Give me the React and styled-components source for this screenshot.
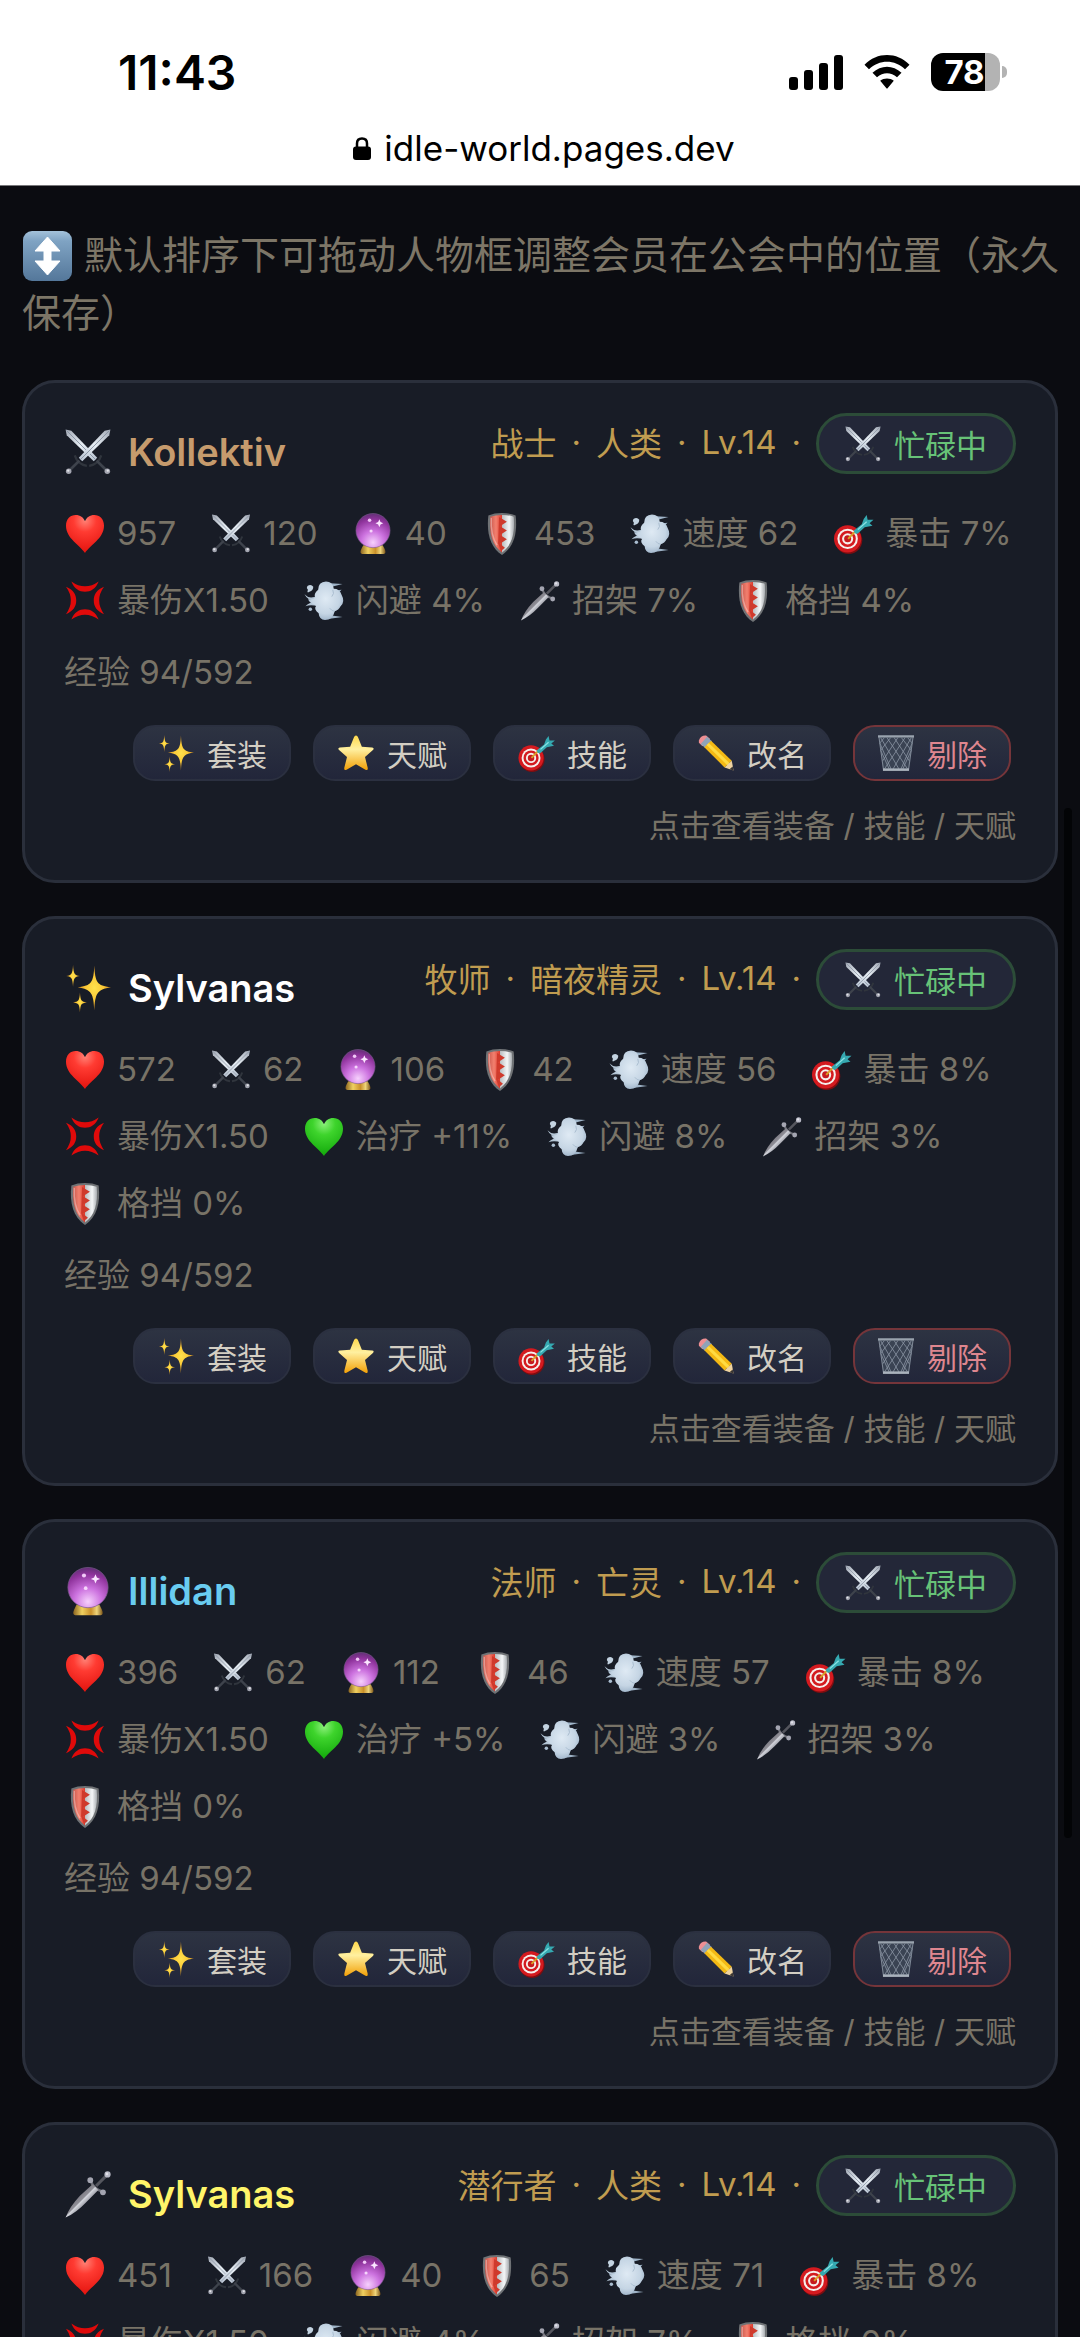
import React from 'react';
import styled, { createGlobalStyle } from 'styled-components';

const GlobalStyle = createGlobalStyle`
  * {
    box-sizing: border-box;
  }

  body {
    margin: 0;
    background: #0b0c11;
    font-family: Inter, 'Noto Sans CJK SC', sans-serif;
  }

  button {
    font-family: inherit;
  }
`;

const Screen = styled.div`
  position: relative;
  height: 100vh;
  overflow: hidden;
`;

const BrowserHeader = styled.header`
  height: 186px;
  background: #fff;
  color: #000;
  border-bottom: 1px solid #77777a;
`;

const StatusRow = styled.div`
  display: flex;
  align-items: center;
  justify-content: space-between;
  height: 128px;
  padding: 16px 73px 0 118px;
`;

const Time = styled.span`
  font-size: 48px;
  font-weight: 600;
`;

const StatusIcons = styled.div`
  display: flex;
  align-items: center;
  gap: 21px;
`;

const BatteryWrap = styled.div`
  display: flex;
  align-items: center;
  gap: 2px;
`;

const BatteryBody = styled.div`
  width: 69px;
  height: 38px;
  padding: 0 7px 0 5px;
  border-radius: 12px;
  background: linear-gradient(to right, #000 78%, #b3b3b3 78%);
  color: #fff;
  font-size: 33px;
  font-weight: 700;
  line-height: 38px;
  text-align: center;
`;

const BatteryCap = styled.div`
  width: 5px;
  height: 12px;
  border-radius: 0 6px 6px 0;
  background: #b3b3b3;
`;

const AddressBar = styled.button`
  display: flex;
  align-items: center;
  justify-content: center;
  gap: 13px;
  width: 100%;
  height: 40px;
  padding: 0 0 0 8px;
  border: 0;
  background: none;
  color: #000;
  font-size: 35px;
`;

const Roster = styled.main`
  padding: 40px 22px;
`;

const Notice = styled.p`
  margin: 0 -6px 38px 0;
  color: #7d7667;
  font-size: 39px;
  line-height: 58px;
`;

const CardList = styled.div`
  display: flex;
  flex-direction: column;
  gap: 33px;
`;

const Card = styled.article`
  padding: 30px 39px 31px;
  border: 3px solid #2a2f3b;
  border-radius: 33px;
  background: #181c26;
  color: #787367;
  font-size: 33px;
`;

const CardHeader = styled.div`
  display: flex;
  align-items: flex-start;
  justify-content: space-between;
  height: 78px;
  margin-bottom: 17px;
`;

const Name = styled.h2`
  display: flex;
  align-items: center;
  gap: 16px;
  height: 78px;
  margin: 0;
  color: ${props => props.$color};
  font-size: 38px;
  font-weight: 600;
`;

const Meta = styled.div`
  display: flex;
  align-items: center;
  gap: 15px;
  color: #c09c50;
  white-space: nowrap;
`;

const MetaText = styled.span`
  padding-bottom: 4px;
`;

const Badge = styled.span`
  display: flex;
  align-items: center;
  gap: 13px;
  height: 61px;
  padding: 0 26px;
  border: 3px solid #2c4c38;
  border-radius: 31px;
  background: #232738;
  color: #67c277;
  font-size: 31px;
`;

const Stats = styled.div`
  display: flex;
  flex-wrap: wrap;
  column-gap: 34px;
  row-gap: 17px;
  line-height: 50px;
`;

const Stat = styled.span`
  display: flex;
  align-items: center;
  gap: 11px;
  white-space: nowrap;
`;

const Exp = styled.div`
  margin-top: 22px;
  line-height: 50px;
`;

const Actions = styled.div`
  display: flex;
  justify-content: flex-end;
  gap: 22px;
  margin-top: 28px;
  padding-right: 5px;
`;

const ActionButton = styled.button`
  display: flex;
  align-items: center;
  gap: 12px;
  height: 56px;
  padding: 0 22px;
  border: 2px solid ${props => (props.$danger ? '#75353a' : '#2b3040')};
  border-radius: 22px;
  background: linear-gradient(#2d3342, #22263a);
  color: ${props => (props.$danger ? '#de868f' : '#d3cec3')};
  font-size: 30px;
`;

const Hint = styled.div`
  margin-top: 22px;
  font-size: 31px;
  line-height: 46px;
  text-align: right;
`;

const ScrollThumb = styled.div`
  position: absolute;
  top: 808px;
  right: 8px;
  width: 8px;
  height: 1030px;
  border-radius: 4px;
  background: #030406;
`;

const Drawing = styled.svg`
  display: block;
  flex: none;
  overflow: visible;
`;

const InlineDrawing = styled(Drawing)`
  display: inline-block;
  margin: -4px 1px 0;
  vertical-align: middle;
`;

const Defs = styled.svg`
  position: absolute;
`;

// Gradients shared by all the icons, defined once for the page
const Gradients = () => (
  <Defs width="0" height="0" aria-hidden="true">
    <defs>
      <linearGradient id="steel" gradientUnits="userSpaceOnUse" x1="39" y1="1" x2="13" y2="27">
        <stop offset="0" stopColor="#a3aab6" />
        <stop offset="0.5" stopColor="#e6edf3" />
        <stop offset="1" stopColor="#b9c4d2" />
      </linearGradient>
      <linearGradient id="dagger" gradientUnits="userSpaceOnUse" x1="10" y1="22" x2="18" y2="30">
        <stop offset="0" stopColor="#77767e" />
        <stop offset="0.45" stopColor="#8f8e96" />
        <stop offset="0.55" stopColor="#d3d5dc" />
        <stop offset="1" stopColor="#8c8d96" />
      </linearGradient>
      <radialGradient id="red" cx="0.5" cy="0.15" r="0.85">
        <stop offset="0" stopColor="#ff8175" />
        <stop offset="0.35" stopColor="#ff3b32" />
        <stop offset="1" stopColor="#e3130e" />
      </radialGradient>
      <radialGradient id="green" cx="0.5" cy="0.15" r="0.85">
        <stop offset="0" stopColor="#8bf07a" />
        <stop offset="0.35" stopColor="#3ed42c" />
        <stop offset="1" stopColor="#12a80b" />
      </radialGradient>
      <radialGradient id="orb" cx="0.5" cy="0.85" r="0.85">
        <stop offset="0" stopColor="#f6d0fd" />
        <stop offset="0.4" stopColor="#cc72df" />
        <stop offset="0.8" stopColor="#8f339c" />
        <stop offset="1" stopColor="#632f76" />
      </radialGradient>
      <linearGradient id="brass" x1="0" y1="0" x2="1" y2="0">
        <stop offset="0" stopColor="#8a6420" />
        <stop offset="0.3" stopColor="#f0d060" />
        <stop offset="0.6" stopColor="#c9902a" />
        <stop offset="0.8" stopColor="#eed47a" />
        <stop offset="1" stopColor="#7d5618" />
      </linearGradient>
      <linearGradient id="shieldRed" x1="0" y1="0" x2="1" y2="0">
        <stop offset="0" stopColor="#c9574c" />
        <stop offset="0.5" stopColor="#f2806f" />
        <stop offset="1" stopColor="#e0392b" />
      </linearGradient>
      <linearGradient id="shieldWhite" x1="0" y1="0" x2="1" y2="0">
        <stop offset="0" stopColor="#b9bdc0" />
        <stop offset="0.6" stopColor="#f4f6f7" />
        <stop offset="1" stopColor="#a9adb1" />
      </linearGradient>
      <radialGradient id="puff" cx="0.5" cy="0.45" r="0.65">
        <stop offset="0" stopColor="#dfeaf4" />
        <stop offset="0.6" stopColor="#c5d5e4" />
        <stop offset="1" stopColor="#8fa6be" />
      </radialGradient>
      <linearGradient id="star" x1="0" y1="0" x2="0" y2="1">
        <stop offset="0" stopColor="#ffd84a" />
        <stop offset="0.4" stopColor="#fff0a0" />
        <stop offset="1" stopColor="#f2a007" />
      </linearGradient>
      <radialGradient id="spark">
        <stop offset="0" stopColor="#ffe14d" />
        <stop offset="0.5" stopColor="#fbcb38" />
        <stop offset="1" stopColor="#d98e1c" />
      </radialGradient>
      <linearGradient id="tile" x1="0" y1="0" x2="0" y2="1">
        <stop offset="0" stopColor="#a4c2da" />
        <stop offset="0.2" stopColor="#7fa3c3" />
        <stop offset="1" stopColor="#54779a" />
      </linearGradient>
    </defs>
  </Defs>
);

const sword = (
  <>
    <path d="M8.5 23 Q11 31 19 32" fill="none" stroke="#30353d" strokeWidth="2" />
    <path d="M12.5 27.5 L4.5 35.5" stroke="#3e434c" strokeWidth="2.4" />
    <path d="M39.5 0.5 L38.5 5.5 L15 28 L12 25 L34.5 1.5 Z" fill="url(#steel)" />
    <path d="M38.5 1.5 L13.5 26.5" stroke="#8893a2" strokeWidth="0.8" />
    <circle cx="3.2" cy="36.8" r="2.4" fill="#a3a5b0" />
    <circle cx="2.8" cy="36.2" r="1" fill="#e4e5ea" />
  </>
);

const heartPath =
  'M20 40 C15 32 0.5 25 0.5 12 C0.5 5 5 1 10.5 1 C15 1 18.5 3.5 20 7.5 C21.5 3.5 25 1 29.5 1 C35 1 39.5 5 39.5 12 C39.5 25 25 32 20 40 Z';

const angerArc = 'M6 0.5 Q20 10.5 34 0.5 C31 8 26 11 20 11 C14 11 9 8 6 0.5 Z';

const icons = {
  swords: (
    <>
      <g transform="matrix(-1 0 0 1 40 0)">{sword}</g>
      {sword}
    </>
  ),
  sparkles: (
    <g fill="url(#spark)">
      <path d="M25.5 0.5 C26.3 15 27.5 18 40 19.5 C27.500 21 26.3 25 25.5 39.5 C24.7 25 23.5 21 11 19.5 C23.5 18 24.7 15 25.5 0.5 Z" />
      <path d="M7 0 C7.5 7.5 8 9 13 9.5 C8 10 7.5 11.5 7 19 C6.5 11.5 6 10 1 9.5 C6 9 6.5 7.5 7 0 Z" />
      <path d="M13 24 C13.5 31 14 32 19 32.5 C14 33 13.5 34 13 41 C12.5 34 12 33 7 32.5 C12 32 12.5 31 13 24 Z" />
    </g>
  ),
  orb: (
    <>
      <path d="M8 36 L10 32 H30 L32 36 Q34 40.5 31 41 H9 Q6 40.5 8 36 Z" fill="url(#brass)" />
      <circle cx="20" cy="17" r="17.5" fill="url(#orb)" stroke="#7b5a8d" strokeWidth="0.6" />
      <path d="M26.5 5.5 L27.7 8.3 L30.5 9.5 L27.7 10.7 L26.5 13.5 L25.3 10.7 L22.5 9.5 L25.3 8.3 Z" fill="#fbe6ff" />
      <circle cx="16.5" cy="6.5" r="1.8" fill="#f1c9f7" />
      <circle cx="18" cy="17.5" r="1.6" fill="#f6d6fb" />
    </>
  ),
  dagger: (
    <>
      <path d="M36 4 L27 13" stroke="#55565e" strokeWidth="2.6" />
      <path d="M22 8 Q25 16 33 18" fill="none" stroke="#6f7079" strokeWidth="2.2" />
      <path d="M0.5 40.5 Q4 31 13 21.5 L24 11.5 L29 16.5 L18 27.5 Q10 36 0.5 40.5 Z" fill="url(#dagger)" />
      <circle cx="22" cy="8" r="2.5" fill="#a4a5b1" />
      <circle cx="33" cy="18.5" r="2.5" fill="#a4a5b1" />
      <circle cx="37" cy="3" r="2.7" fill="#b9bac6" />
      <circle cx="36.5" cy="2.5" r="1.1" fill="#e2e2ea" />
    </>
  ),
  heart: <path d={heartPath} fill="url(#red)" />,
  greenHeart: <path d={heartPath} fill="url(#green)" />,
  shield: (
    <>
      <path d="M20 -1 Q28 -1 34 1.5 C36 20 32 34 20 42 C8 34 4 20 6 1.5 Q12 -1 20 -1 Z" fill="#6f7275" />
      <path d="M20 1 V39.5 C10 32 6.5 20 8 2.8 Q13 1 20 1 Z" fill="url(#shieldRed)" />
      <path d="M20 1 Q27 1 32 2.8 C33.5 20 30 32 20 39.5 Z" fill="url(#shieldWhite)" />
      <path d="M17 3 L25 8 L18 12.5 L25 17 L18 21.5 L25 26 L18 30.5 L23 34.5 L19 38 L16 30 Z" fill="#cf3a2c" />
      <path d="M9 4 Q8 22 15 32" fill="none" stroke="#fff" strokeOpacity="0.35" strokeWidth="1.5" />
    </>
  ),
  dash: (
    <>
      <path d="M22 2 L39 3 L28 6 Z M26 35 L39 37 L24 39 Z M30 10 L38 9 L33 14 Z" fill="#9fb4c8" />
      <path d="M14 14 Q6 20 0 13.5 Q4 21.5 14 20 Z M14 21 Q5 21 1 26 Q6 23.500 14 26 Z" fill="#b4c6d6" />
      <path d="M3 5 Q7 3 9 6 Q9 10 5 11 Q2 13 3.500 9 Q1.500 7 3 5 Z" fill="#c3d3e1" />
      <circle cx="6" cy="29" r="1.8" fill="#a9bccf" />
      <path d="M14 9 Q14 1 22 0.5 Q29 0.5 30 8 Q36 8 38 14 Q42 21 37 26 Q35 30 31 31 Q29 40 21 40 Q15 39.5 14.5 33 Q9 29 12 25.5 Q3 21 4 18.5 Q8 20 11 17 Q9 13 14 9 Z" fill="url(#puff)" />
      <path d="M29 9 Q31 13 28 16 M31 31 Q28 31 26 28" fill="none" stroke="#a9bccf" strokeWidth="1" />
    </>
  ),
  target: (
    <>
      <ellipse cx="15.5" cy="27" rx="14" ry="14" fill="#7f0d10" />
      <circle cx="14.5" cy="25.5" r="14" fill="#d41a1f" />
      <circle cx="14.5" cy="25.5" r="10.5" fill="#f6efec" />
      <circle cx="14.5" cy="25.5" r="8.4" fill="#d41a1f" />
      <circle cx="14.5" cy="25.5" r="5.7" fill="#f6efec" />
      <circle cx="14.5" cy="25.5" r="3.6" fill="#c51a1e" />
      <path d="M15 25.5 L23 17" stroke="#d9a128" strokeWidth="2" />
      <path d="M21 17 L29 10.5 L31 5 L34 1 L35 6 L41 6 L37 9.5 L40 12 L32 13.5 L25 20 Q21 21 21 17 Z" fill="#35a9b1" />
      <path d="M25 16 L34 8" stroke="#8be3e4" strokeWidth="1.3" />
    </>
  ),
  anger: (
    <g fill="#e00a0a">
      <path d={angerArc} />
      <path d={angerArc} transform="rotate(90 20 20)" />
      <path d={angerArc} transform="rotate(180 20 20)" />
      <path d={angerArc} transform="rotate(270 20 20)" />
    </g>
  ),
  star: (
    <path
      d="M20 0.5 Q21.5 0.5 22.5 3 L26.5 13 L38 14 Q41 14.5 38.5 17 L30 24.5 L33 36.5 Q33.5 40 30.5 38.5 L20 32.5 L9.5 38.5 Q6.5 40 7 36.5 L10 24.5 L1.5 17 Q-1 14.5 2 14 L13.5 13 L17.5 3 Q18.5 0.5 20 0.5 Z"
      fill="url(#star)"
    />
  ),
  pencil: (
    <>
      <path d="M1 6 Q3 0 9 0.5 L13.5 4.5 L5 12.5 L1 8.5 Z" fill="#ee8f93" />
      <path d="M10 2 L15.5 7 L8 14.5 L3 10 Z" fill="#8fa3b8" />
      <path d="M14.5 6.5 L37.5 28.5 L29.5 36 L7 13.5 Z" fill="#f4b914" />
      <path d="M12 9 L35 31 L32.5 33.5 L9.5 11 Z" fill="#ffdb42" />
      <path d="M37.5 28.5 L39.5 39.5 L29.5 36 Z" fill="#efd3a0" />
      <path d="M38.5 35 L39.5 39.5 L35 38 Z" fill="#3b3632" />
    </>
  ),
  trash: (
    <>
      <path d="M1 2 L6 39 H34 L39 2 Z" fill="#3a4353" />
      <path
        d="M2 9 L15 39 M3 3 L24 39 M10 3 L33 38 M18 3 L35 29 M26 3 L37 17 M33 3 L38 9 M38 9 L25 39 M37 3 L16 39 M30 3 L7 38 M22 3 L5 29 M14 3 L3 17 M7 3 L2 9 M3 17 L13 39 M37 17 L27 39"
        stroke="#8b95a3"
        strokeWidth="0.9"
      />
      <path d="M1 2 L6 38 M39 2 L34 38" stroke="#7d8795" strokeWidth="1.2" />
      <path d="M0 1.5 H40" stroke="#9aa3ae" strokeWidth="2.6" />
      <path d="M5.5 38.5 H34.5" stroke="#aab2bc" strokeWidth="2.8" />
    </>
  ),
};

const Icon = ({ name, size, box = size }) => {
  const pad = ((box - size) / 2) * (40 / size);
  return (
    <Drawing
      width={box}
      height={size}
      viewBox={`${-pad} 0 ${40 + pad * 2} 40`}
      aria-hidden="true"
    >
      {icons[name]}
    </Drawing>
  );
};

const UpDownIcon = () => (
  <InlineDrawing width="49" height="50" viewBox="0 0 49 50" aria-hidden="true">
    <rect width="49" height="50" rx="9" fill="url(#tile)" />
    <path
      d="M24.5 6 L37 20 H28 V30 H37 L24.5 44 L12 30 H21 V20 H12 Z"
      fill="#fff"
      stroke="#fff"
      strokeWidth="1"
      strokeLinejoin="round"
    />
  </InlineDrawing>
);

const SignalIcon = () => (
  <Drawing width="54" height="35" viewBox="0 0 54 35" aria-hidden="true">
    <rect x="0" y="22" width="9" height="13" rx="3" />
    <rect x="15" y="15" width="9" height="20" rx="3" />
    <rect x="30" y="8" width="9" height="27" rx="3" />
    <rect x="45" y="0" width="9" height="35" rx="3" />
  </Drawing>
);

const WifiIcon = () => (
  <Drawing width="46" height="34" viewBox="0 0 46 34" aria-hidden="true">
    <path d="M0.5 9.8 C13 -3.2 33 -3.2 45.5 9.8 L41 14.3 C31 4.3 15 4.3 5 14.3 Z" />
    <path d="M8.5 17.8 C17 9.8 29 9.8 37.5 17.8 L33 22.3 C27 16.8 19 16.8 13 22.3 Z" />
    <path d="M16.2 25.8 C20 22.6 26 22.6 29.8 25.8 L23.8 33 Q23 34 22.2 33 Z" />
  </Drawing>
);

const LockIcon = () => (
  <Drawing width="18" height="23" viewBox="0 0 18 23" aria-hidden="true">
    <path d="M4 11 V6.5 Q4 1.5 9 1.5 Q14 1.5 14 6.5 V11" fill="none" stroke="#000" strokeWidth="2.5" />
    <rect y="9.5" width="18" height="13.5" rx="3" />
  </Drawing>
);

const actions = [
  { icon: 'sparkles', label: '套装' },
  { icon: 'star', label: '天赋' },
  { icon: 'target', label: '技能' },
  { icon: 'pencil', label: '改名' },
  { icon: 'trash', label: '剔除', danger: true },
];

const members = [
  {
    id: 1,
    name: 'Kollektiv',
    color: '#c69b6d',
    icon: 'swords',
    role: '战士',
    race: '人类',
    stats: [
      ['heart', '957'],
      ['swords', '120'],
      ['orb', '40'],
      ['shield', '453'],
      ['dash', '速度 62'],
      ['target', '暴击 7%'],
      ['anger', '暴伤X1.50'],
      ['dash', '闪避 4%'],
      ['dagger', '招架 7%'],
      ['shield', '格挡 4%'],
    ],
  },
  {
    id: 2,
    name: 'Sylvanas',
    color: '#ffffff',
    icon: 'sparkles',
    role: '牧师',
    race: '暗夜精灵',
    stats: [
      ['heart', '572'],
      ['swords', '62'],
      ['orb', '106'],
      ['shield', '42'],
      ['dash', '速度 56'],
      ['target', '暴击 8%'],
      ['anger', '暴伤X1.50'],
      ['greenHeart', '治疗 +11%'],
      ['dash', '闪避 8%'],
      ['dagger', '招架 3%'],
      ['shield', '格挡 0%'],
    ],
  },
  {
    id: 3,
    name: 'Illidan',
    color: '#69ccf0',
    icon: 'orb',
    role: '法师',
    race: '亡灵',
    stats: [
      ['heart', '396'],
      ['swords', '62'],
      ['orb', '112'],
      ['shield', '46'],
      ['dash', '速度 57'],
      ['target', '暴击 8%'],
      ['anger', '暴伤X1.50'],
      ['greenHeart', '治疗 +5%'],
      ['dash', '闪避 3%'],
      ['dagger', '招架 3%'],
      ['shield', '格挡 0%'],
    ],
  },
  {
    id: 4,
    name: 'Sylvanas',
    color: '#fff569',
    icon: 'dagger',
    role: '潜行者',
    race: '人类',
    stats: [
      ['heart', '451'],
      ['swords', '166'],
      ['orb', '40'],
      ['shield', '65'],
      ['dash', '速度 71'],
      ['target', '暴击 8%'],
      ['anger', '暴伤X1.50'],
      ['dash', '闪避 4%'],
      ['dagger', '招架 7%'],
      ['shield', '格挡 0%'],
    ],
  },
];

const MemberCard = ({ member }) => (
  <Card draggable>
    <CardHeader>
      <Name $color={member.color}>
        <Icon name={member.icon} size={46} box={48} />
        {member.name}
      </Name>
      <Meta>
        {[member.role, member.race, 'Lv.14'].map(text => (
          <React.Fragment key={text}>
            <MetaText>{text}</MetaText>
            <MetaText>·</MetaText>
          </React.Fragment>
        ))}
        <Badge>
          <Icon name="swords" size={36} />
          忙碌中
        </Badge>
      </Meta>
    </CardHeader>
    <Stats>
      {member.stats.map(([icon, label], i) => (
        <Stat key={i}>
          <Icon name={icon} size={39} box={42} />
          {label}
        </Stat>
      ))}
    </Stats>
    <Exp>经验 94/592</Exp>
    <Actions>
      {actions.map(action => (
        <ActionButton key={action.label} type="button" $danger={action.danger}>
          <Icon name={action.icon} size={36} box={38} />
          {action.label}
        </ActionButton>
      ))}
    </Actions>
    <Hint>点击查看装备 / 技能 / 天赋</Hint>
  </Card>
);

const App = () => (
  <>
    <GlobalStyle />
    <Gradients />
    <Screen>
      <BrowserHeader>
        <StatusRow>
          <Time>11:43</Time>
          <StatusIcons>
            <SignalIcon />
            <WifiIcon />
            <BatteryWrap>
              <BatteryBody>78</BatteryBody>
              <BatteryCap />
            </BatteryWrap>
          </StatusIcons>
        </StatusRow>
        <AddressBar type="button">
          <LockIcon />
          idle-world.pages.dev
        </AddressBar>
      </BrowserHeader>
      <Roster>
        <Notice>
          <UpDownIcon /> 默认排序下可拖动人物框调整会员在公会中的位置（永久保存）
        </Notice>
        <CardList>
          {members.map(member => (
            <MemberCard key={member.id} member={member} />
          ))}
        </CardList>
      </Roster>
      <ScrollThumb />
    </Screen>
  </>
);

export default App;
